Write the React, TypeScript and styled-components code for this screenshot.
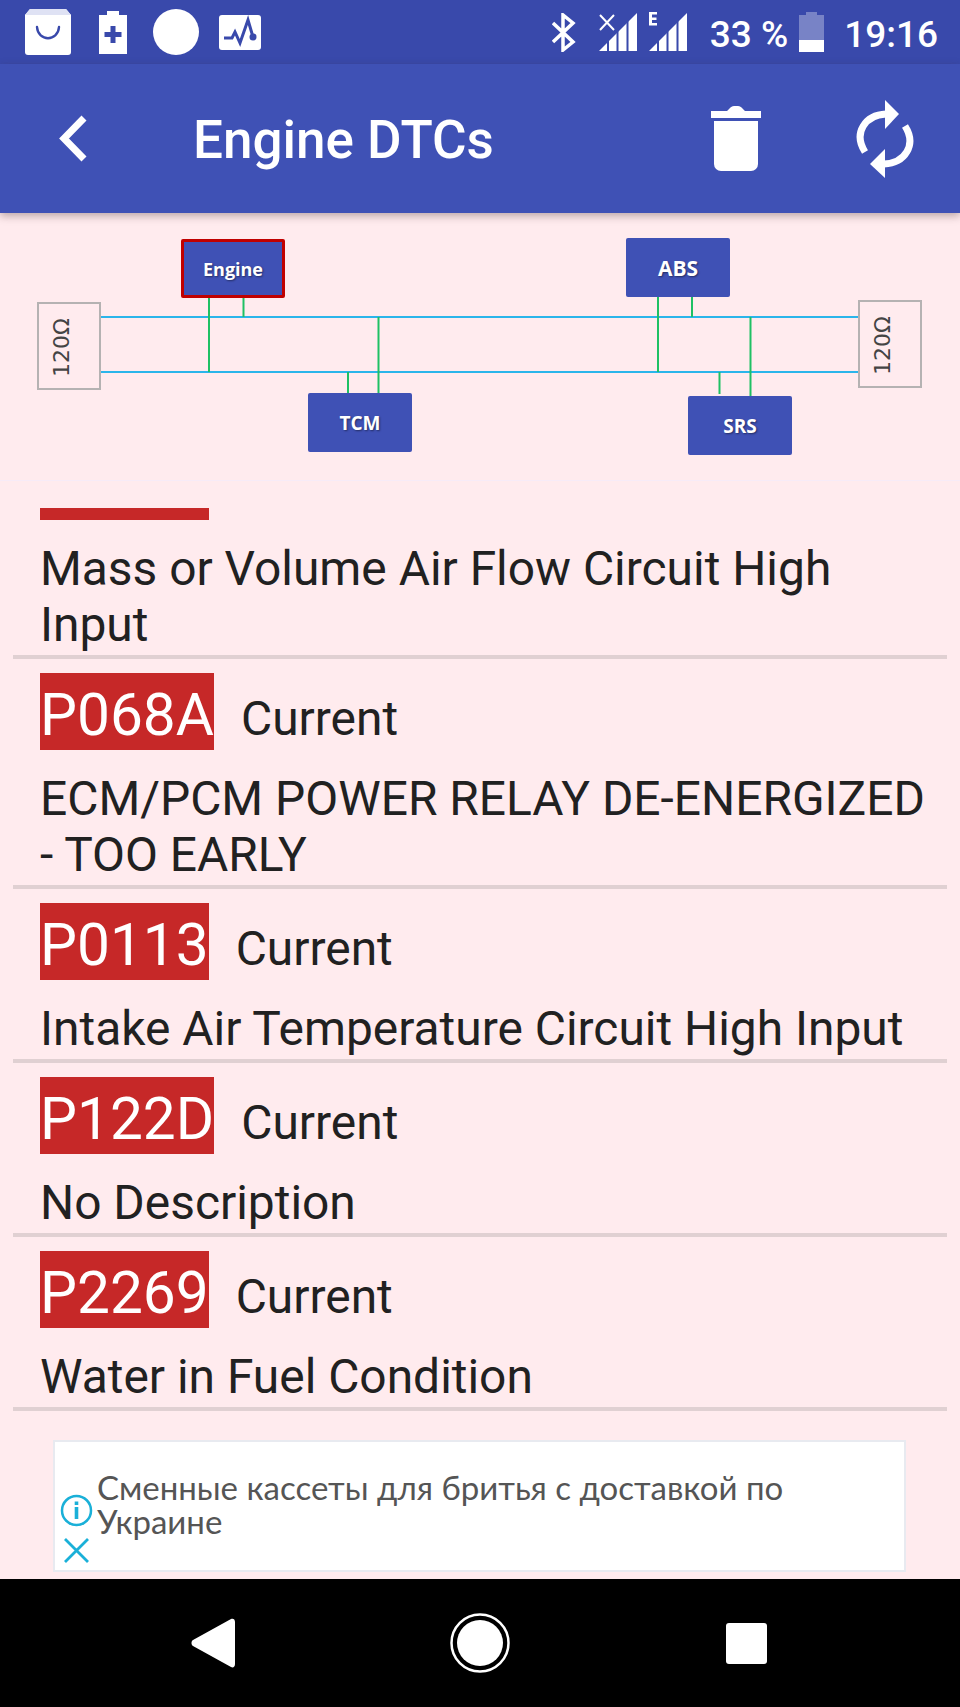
import styled, { createGlobalStyle } from 'styled-components'

const GlobalStyle = createGlobalStyle`
  html, body {
    margin: 0;
    padding: 0;
    background: #000;
  }
  * {
    box-sizing: border-box;
  }
`

type Dtc = {
  code: string
  status?: string
  description: string
}

const dtcs: Dtc[] = [
  { code: '', description: 'Mass or Volume Air Flow Circuit High Input' },
  {
    code: 'P068A',
    status: 'Current',
    description: 'ECM/PCM POWER RELAY DE-ENERGIZED - TOO EARLY',
  },
  {
    code: 'P0113',
    status: 'Current',
    description: 'Intake Air Temperature Circuit High Input',
  },
  { code: 'P122D', status: 'Current', description: 'No Description' },
  { code: 'P2269', status: 'Current', description: 'Water in Fuel Condition' },
]

const wires = ['M101 317H858', 'M101 372H858']

const stubs = [
  'M209 296V372',
  'M243.5 296V317',
  'M378.5 317V393',
  'M348 372V393',
  'M658 297V372',
  'M692 297V317',
  'M750.5 317V396',
  'M719.5 372V394',
]

const StatusIcons = () => (
  <StatusLeft>
    <svg width="46" height="46" viewBox="0 0 46 46">
      <path d="M5 0h36l5 6v37a3 3 0 0 1-3 3H3a3 3 0 0 1-3-3V6z" fill="#fff" />
      <path d="M5 0h36l5 6H0z" fill="#dfe2f4" />
      <path d="M12 18c1 15 21 15 22 0" fill="none" stroke="#3949ab" strokeWidth="2.4" strokeLinecap="round" />
    </svg>
    <svg width="28" height="43" viewBox="0 0 28 43">
      <path d="M8 0h12v4h8v39H0V4h8z" fill="#fff" />
      <path d="M11.5 15h5v6h6v5h-6v6h-5v-6h-6v-5h6z" fill="#3949ab" />
    </svg>
    <svg width="46" height="46" viewBox="0 0 46 46">
      <circle cx="23" cy="23" r="23" fill="#fff" />
    </svg>
    <svg width="42" height="35" viewBox="0 0 42 35">
      <rect width="42" height="35" rx="3" fill="#fff" />
      <path d="M5 23h8l3-6 5 11 8-23 5 17" fill="none" stroke="#3949ab" strokeWidth="3" />
      <circle cx="34" cy="22" r="3.5" fill="#3949ab" />
    </svg>
  </StatusLeft>
)

const SignalIcon = ({ mark }: { mark: 'x' | 'e' }) => (
  <svg width="40" height="40" viewBox="0 0 40 40">
    <path d="M38 1v38H0z" fill="#fff" />
    <path d="M9 29v10M18.500 19v20M28.500 9v30" stroke="#3949ab" strokeWidth="2" />
    {mark === 'x' ? (
      <path d="M1 3l14 15M15 3L1 18" stroke="#fff" strokeWidth="2" fill="none" />
    ) : (
      <path d="M0 0h8v2.500H3v3h4.500V8H3v3h5v2.500H0z" fill="#fff" />
    )}
  </svg>
)

const StatusRight = () => (
  <StatusRightBox>
    <BluetoothSlot>
      <svg width="24" height="39" viewBox="0 0 24 39">
        <path d="M1 10l20 19-10 8V2l10 8L1 29" fill="none" stroke="#fff" strokeWidth="3.500" />
      </svg>
    </BluetoothSlot>
    <SignalSlot>
      <SignalIcon mark="x" />
      <SignalIcon mark="e" />
    </SignalSlot>
    <Percent>33 %</Percent>
    <BatterySlot>
      <svg width="25" height="40" viewBox="0 0 25 40">
        <path d="M7 0h11v3h7v37H0V3h7z" fill="#fff" fillOpacity="0.32" />
        <path d="M0 28h25v12H0z" fill="#fff" />
      </svg>
    </BatterySlot>
    <Clock>19:16</Clock>
  </StatusRightBox>
)

const BusDiagram = () => (
  <Diagram>
    <Wiring width="960" height="267" viewBox="0 213 960 267">
      {wires.map((d) => (
        <path key={d} d={d} stroke="#2bb5ea" strokeWidth="2" fill="none" />
      ))}
      {stubs.map((d) => (
        <path key={d} d={d} stroke="#1fc064" strokeWidth="2" fill="none" />
      ))}
    </Wiring>
    <Node $x={181} $y={26} $active>
      Engine
    </Node>
    <Node $x={308} $y={180}>
      TCM
    </Node>
    <Node $x={626} $y={25} $size={21}>
      ABS
    </Node>
    <Node $x={688} $y={183}>
      SRS
    </Node>
    <Terminator $x={37} $y={89}>
      <span>120Ω</span>
    </Terminator>
    <Terminator $x={858} $y={87}>
      <span>120Ω</span>
    </Terminator>
  </Diagram>
)

const App = () => (
  <Screen>
    <GlobalStyle />
    <StatusBar>
      <StatusIcons />
      <StatusRight />
    </StatusBar>
    <AppBar>
      <BackButton type="button" aria-label="Back">
        <svg width="30" height="47" viewBox="0 0 30 47">
          <path d="M26 3L6 23.500 26 44" fill="none" stroke="#fff" strokeWidth="7" />
        </svg>
      </BackButton>
      <Title>Engine DTCs</Title>
      <ActionButton type="button" aria-label="Clear">
        <svg width="50" height="65" viewBox="0 0 50 65">
          <path d="M0 5h16l3-3c1-1 2-2 4-2h4c2 0 3 1 4 2l3 3h16v7H0z" fill="#fff" />
          <path d="M3 15h44v43a7 7 0 0 1-7 7H10a7 7 0 0 1-7-7z" fill="#fff" />
        </svg>
      </ActionButton>
      <ActionButton type="button" aria-label="Refresh">
        <svg width="58" height="78" viewBox="0 0 58 78">
          <path d="M9 52C-3 33 9 15 30 14" fill="none" stroke="#fff" strokeWidth="7" />
          <path d="M29 0l14 14-14 15z" fill="#fff" />
          <path d="M49 26c12 19 0 37-21 38" fill="none" stroke="#fff" strokeWidth="7" />
          <path d="M29 78L14 64l15-15z" fill="#fff" />
        </svg>
      </ActionButton>
    </AppBar>
    <Main>
      <BusDiagram />
      <List>
        {dtcs.map((dtc) => (
          <Row key={dtc.description}>
            <Head>
              {dtc.code ? <Code>{dtc.code}</Code> : <EmptyCode />}
              {dtc.status && <Status>{dtc.status}</Status>}
            </Head>
            <Description>{dtc.description}</Description>
          </Row>
        ))}
      </List>
      <AdSlot>
        <Ad>
          <AdIcons>
            <svg width="33" height="33" viewBox="0 0 33 33">
              <circle cx="16.500" cy="16.500" r="14.500" fill="none" stroke="#1ab0d8" strokeWidth="2.500" />
              <path d="M14.700 13h3.600v12h-3.600zM14.700 7.500h3.600v3.500h-3.600z" fill="#1ab0d8" />
            </svg>
            <svg width="25" height="25" viewBox="0 0 25 25">
              <path d="M1 1l23 23M24 1L1 24" stroke="#1ab0d8" strokeWidth="2.800" fill="none" />
            </svg>
          </AdIcons>
          <AdText>Сменные кассеты для бритья с доставкой по Украине</AdText>
        </Ad>
      </AdSlot>
    </Main>
    <NavBar>
      <svg width="44" height="50" viewBox="0 0 44 50">
        <path d="M40 1c2-1 4 0 4 3v42c0 3-2 4-4 3L2 28c-2-1-2-5 0-6z" fill="#fff" />
      </svg>
      <svg width="60" height="60" viewBox="0 0 60 60">
        <circle cx="30" cy="30" r="28.500" fill="none" stroke="#fff" strokeWidth="2.500" />
        <circle cx="30" cy="30" r="23" fill="#fff" />
      </svg>
      <svg width="41" height="41" viewBox="0 0 41 41">
        <rect width="41" height="41" rx="3" fill="#fff" />
      </svg>
    </NavBar>
  </Screen>
)

const Screen = styled.div`
  width: 960px;
  height: 1707px;
  display: flex;
  flex-direction: column;
  overflow: hidden;
  font-family: Roboto, 'Liberation Sans', sans-serif;
  background: #ffebee;
`

const StatusBar = styled.div`
  height: 64px;
  flex: none;
  display: flex;
  justify-content: space-between;
  align-items: center;
  background: #3949ab;
  color: #fff;
`

const StatusLeft = styled.div`
  display: flex;
  align-items: center;
  gap: 20px;
  padding-left: 25px;

  svg:nth-child(2) {
    margin-left: 8px;
    margin-right: 6px;
  }
`

const StatusRightBox = styled.div`
  display: flex;
  align-items: center;
  padding-right: 22px;
`

const BluetoothSlot = styled.div`
  display: flex;
  margin-right: 23px;
`

const SignalSlot = styled.div`
  display: flex;
  gap: 10px;
  margin-right: 21px;
`

const Percent = styled.span`
  padding-top: 4px;
  font-size: 37px;
  font-weight: 500;
  margin-right: 11px;
`

const BatterySlot = styled.div`
  display: flex;
  margin-right: 20px;
`

const Clock = styled.span`
  padding-top: 4px;
  font-size: 37px;
  font-weight: 500;
`

const AppBar = styled.header`
  position: relative;
  z-index: 1;
  height: 149px;
  flex: none;
  display: flex;
  align-items: center;
  background: #3f51b5;
  color: #fff;
  box-shadow: 0 3px 8px rgba(60, 40, 40, 0.35);
`

const BackButton = styled.button`
  width: 193px;
  padding: 0 0 0 58px;
  display: flex;
  background: none;
  border: 0;
`

const Title = styled.h1`
  flex: 1;
  margin: 0;
  padding-top: 3px;
  font-size: 53px;
  font-weight: 500;
`

const ActionButton = styled.button`
  display: flex;
  padding: 0;
  background: none;
  border: 0;

  & + & {
    margin-left: 95px;
    margin-right: 46px;
  }
`

const Main = styled.main`
  flex: 1;
  display: flex;
  flex-direction: column;
  min-height: 0;
`

const Diagram = styled.section`
  position: relative;
  height: 268px;
  flex: none;
  border-bottom: 1px solid #f7ebf7;
`

const Wiring = styled.svg`
  position: absolute;
  left: 0;
  top: 0;
`

const Node = styled.div<{ $x: number; $y: number; $active?: boolean; $size?: number }>`
  position: absolute;
  left: ${(p) => p.$x}px;
  top: ${(p) => p.$y}px;
  width: 104px;
  height: 59px;
  display: flex;
  align-items: center;
  justify-content: center;
  background: #3f51b5;
  border: ${(p) => (p.$active ? '3px solid #c00000' : '0')};
  border-radius: 2px;
  color: #fff;
  font-family: 'Open Sans', sans-serif;
  font-size: ${(p) => p.$size ?? (p.$active ? 18 : 19)}px;
  font-weight: 700;
  text-shadow: 1px 1px 2px rgba(0, 0, 0, 0.45);
`

const Terminator = styled.div<{ $x: number; $y: number }>`
  position: absolute;
  left: ${(p) => p.$x}px;
  top: ${(p) => p.$y}px;
  width: 64px;
  height: 88px;
  padding: 3px 16px 0 0;
  display: flex;
  align-items: center;
  justify-content: center;
  border: 2px solid #b5b2b2;
  color: #444;
  font-family: 'DejaVu Sans', sans-serif;
  font-size: 22px;

  span {
    transform: rotate(-90deg);
    white-space: nowrap;
  }
`

const List = styled.div`
  padding: 13px 13px 0;
  display: flex;
  flex-direction: column;
`

const Row = styled.article`
  padding: 14px 0 1.5px 27px;
  border-bottom: 4px solid #e0d0d2;
`

const Head = styled.div`
  display: flex;
  align-items: baseline;
  gap: 27px;
`

const Code = styled.span`
  height: 77.5px;
  background: #c62828;
  color: #fff;
  font-size: 58.6px;
  line-height: 84px;
`

const EmptyCode = styled.span`
  width: 169px;
  height: 12px;
  background: #c62828;
`

const Status = styled.span`
  color: #212121;
  font-size: 47.9px;
`

const Description = styled.p`
  margin: 21px 0 0;
  color: #212121;
  font-size: 47.9px;
  line-height: 56px;
`

const AdSlot = styled.div`
  padding: 29px 54px 0 53px;
`

const Ad = styled.aside`
  height: 132px;
  display: flex;
  align-items: center;
  gap: 4px;
  background: #fff;
  border: 2px solid #e8eaf0;
`

const AdIcons = styled.div`
  align-self: flex-end;
  display: flex;
  flex-direction: column;
  align-items: center;
  gap: 11px;
  padding: 0 0 7px 5px;
`

const AdText = styled.div`
  padding-bottom: 3px;
  color: #555;
  font-family: Lato, sans-serif;
  font-size: 33px;
  line-height: 34px;
`

const NavBar = styled.nav`
  height: 128px;
  flex: none;
  display: flex;
  align-items: center;
  background: #000;
  padding-left: 191px;
  gap: 215px;

  svg:nth-child(3) {
    margin-left: 1px;
  }
`

export default App
